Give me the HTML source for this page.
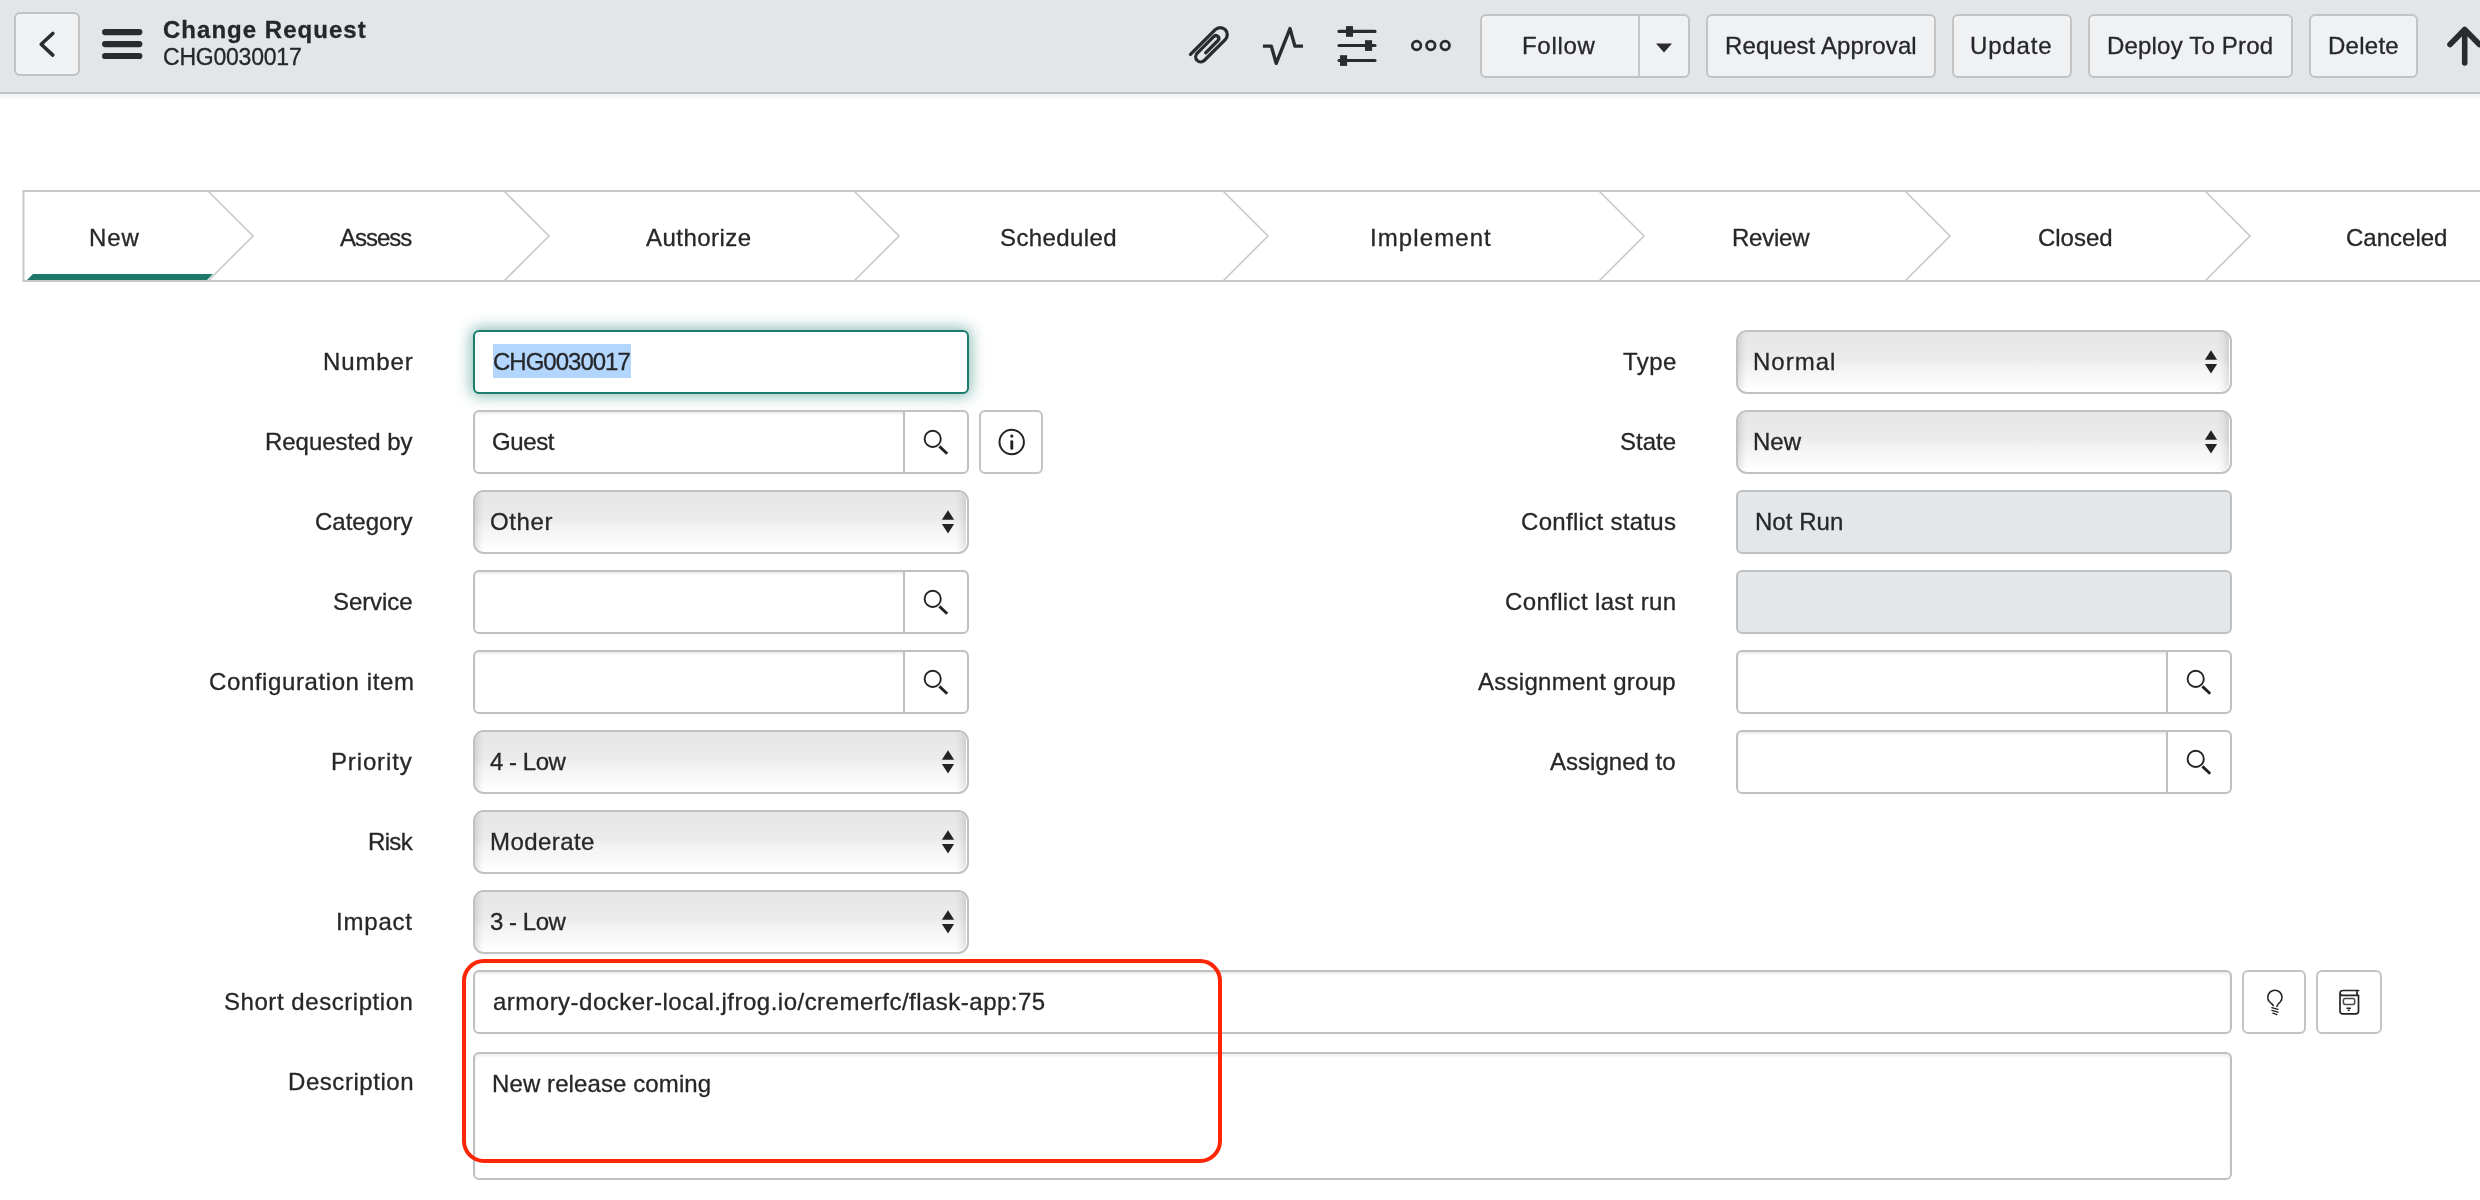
<!DOCTYPE html>
<html lang="en">
<head>
<meta charset="utf-8">
<title>Change Request CHG0030017</title>
<style>
*{box-sizing:border-box;margin:0;padding:0}
html,body{width:2480px;height:1200px;overflow:hidden;background:#fff}
body{position:relative;font-family:"Liberation Sans",sans-serif;font-size:24px;color:#2a2b2d;line-height:1}
.abs{position:absolute}
.t{position:absolute;white-space:nowrap;line-height:1;color:#262729;will-change:transform;-webkit-text-stroke:0.3px #262729}
#hdr{position:absolute;left:0;top:0;width:2480px;height:94px;background:#e3e6e9;border-bottom:2px solid #c1c1c1}
#hsh{position:absolute;left:0;top:94px;width:2480px;height:7px;background:linear-gradient(to bottom,#f1f1f1,#fff)}
.btn{position:absolute;top:14px;height:64px;border:2px solid #c3c3c4;border-radius:6px;background:#f0f1f3}
.inp{position:absolute;border:2px solid #c0c0c1;border-radius:6px;background:#fff;box-shadow:inset 0 2px 3px rgba(0,0,0,.08)}
.ro{position:absolute;border:2px solid #c0c0c1;border-radius:6px;background:#e4e7ea}
.sel{position:absolute;width:496px;height:64px;border:2px solid #c1c1c1;border-radius:11px;background:#fff;padding:0}
.sel i{position:absolute;left:0;top:0;right:1px;bottom:1px;border-radius:9px 8px 8px 9px;background:
 linear-gradient(to right,rgba(0,0,0,.10) 0,rgba(0,0,0,.03) 5px,rgba(0,0,0,0) 9px,rgba(0,0,0,0) calc(100% - 11px),rgba(0,0,0,.03) calc(100% - 6px),rgba(0,0,0,.11) 100%),
 linear-gradient(to bottom,#e6e6e6 0,#eaeaea 30%,#ececec 49%,#f0f0f0 51%,#f8f8f8 78%,#fff 100%)}
.ibtn{position:absolute;width:64px;height:64px;border:2px solid #c3c3c4;border-radius:6px;background:#fff}
</style>
</head>
<body>

<div id="hdr"></div><div id="hsh"></div>
<div class="btn" style="left:14px;top:12px;width:66px;height:64px"></div>
<svg class="abs" style="left:14px;top:12px" width="66" height="64" viewBox="0 0 66 64"><path d="M38.8 21.5 L27.2 32.3 L38.8 43.1" fill="none" stroke="#2a2b2d" stroke-width="3.6" stroke-linecap="round" stroke-linejoin="round"/></svg>
<svg class="abs" style="left:101px;top:27px" width="42" height="34" viewBox="0 0 42 34"><g fill="#2a2b2d"><rect x="1" y="2" width="40.4" height="6.2" rx="3.1"/><rect x="1" y="14" width="40.4" height="6.2" rx="3.1"/><rect x="1" y="25.9" width="40.4" height="6.2" rx="3.1"/></g></svg>
<span class="t" style="left:163.2px;top:17.6px;font-size:24px;letter-spacing:1.02px;font-weight:700;">Change Request</span>
<span class="t" style="left:163.3px;top:46.3px;font-size:23px;letter-spacing:-0.22px;">CHG0030017</span>
<svg class="abs" style="left:1180px;top:10px" width="290" height="70" viewBox="1180 10 290 70">
 <g fill="none" stroke="#2a2b2d" stroke-linecap="round" stroke-linejoin="round">
  <g transform="translate(1184,20) rotate(-45)"><path stroke-width="3.3" d="M-19.74 28.88 L15.32 28.88 A7.04 7.04 0 0 1 15.32 42.96 L-14.35 42.96 A5.1 5.1 0 0 1 -14.35 32.77 L9.58 32.77 A2.89 2.89 0 0 1 9.58 38.54 L-7.81 38.54"/></g>
  <path stroke-width="3.4" stroke-linecap="butt" stroke-linejoin="round" d="M1262.9 46.1 H1271.3 L1276.2 63.3 L1290 28.6 L1294.9 46.1 H1303"/>
  <path stroke-width="3.2" d="M1339 31.4 H1375 M1339 45.5 H1375 M1339 60.5 H1375"/>
  <circle cx="1416.6" cy="45.5" r="4.3" stroke-width="2.7"/><circle cx="1430.8" cy="45.5" r="4.3" stroke-width="2.7"/><circle cx="1445.2" cy="45.5" r="4.3" stroke-width="2.7"/>
 </g>
 <g fill="#2a2b2d"><rect x="1346" y="26.1" width="7" height="10.7"/><rect x="1365" y="40.2" width="7.1" height="10.7"/><rect x="1340" y="55.2" width="7.1" height="10.7"/></g>
</svg>
<div class="btn" style="left:1480px;width:210px"></div>
<div class="abs" style="left:1638px;top:16px;width:2px;height:60px;background:#c5c7c9"></div>
<svg class="abs" style="left:1655px;top:42px" width="18" height="12" viewBox="0 0 18 12"><path d="M1 1.5 H17 L9 10.5 Z" fill="#2a2b2d"/></svg>
<span class="t" style="left:1522.2px;top:33.7px;font-size:24px;letter-spacing:0.7px;">Follow</span>
<div class="btn" style="left:1706px;width:230px"></div>
<span class="t" style="left:1724.7px;top:33.7px;font-size:24px;letter-spacing:0.15px;">Request Approval</span>
<div class="btn" style="left:1952px;width:120px"></div>
<span class="t" style="left:1970.2px;top:33.7px;font-size:24px;letter-spacing:0.84px;">Update</span>
<div class="btn" style="left:2088px;width:205px"></div>
<span class="t" style="left:2106.8px;top:33.7px;font-size:24px;letter-spacing:0.19px;">Deploy To Prod</span>
<div class="btn" style="left:2309px;width:109px"></div>
<span class="t" style="left:2327.6px;top:33.7px;font-size:24px;letter-spacing:0.26px;">Delete</span>
<svg class="abs" style="left:2440px;top:20px" width="40" height="52" viewBox="2440 20 40 52"><path d="M2464.7 63 V29.5 M2450 44.5 L2464.7 29.5 L2479.4 44.5" fill="none" stroke="#2a2b2d" stroke-width="5.6" stroke-linecap="round" stroke-linejoin="round"/></svg>
<svg class="abs" style="left:0;top:180px" width="2480" height="110" viewBox="0 180 2480 110">
 <path d="M2490 191 H23.5 V281 H2490" fill="none" stroke="#c6c6c6" stroke-width="2"/>
 <g fill="none" stroke="#c9c9c9" stroke-width="1.6">
  <path d="M208 191 L253 236 L208 281"/>
  <path d="M504 191 L549 236 L504 281"/>
  <path d="M854 191 L899 236 L854 281"/>
  <path d="M1223 191 L1268 236 L1223 281"/>
  <path d="M1599 191 L1644 236 L1599 281"/>
  <path d="M1905 191 L1950 236 L1905 281"/>
  <path d="M2205 191 L2250 236 L2205 281"/>
 </g>
 <path d="M33 274 H213 L207 280 H27 Z" fill="#1d786a"/>
</svg>
<span class="t" style="left:88.5px;top:225.5px;font-size:24px;letter-spacing:0.9px;">New</span>
<span class="t" style="left:340.0px;top:225.5px;font-size:24px;letter-spacing:-1.0px;">Assess</span>
<span class="t" style="left:646.4px;top:225.5px;font-size:24px;letter-spacing:0.47px;">Authorize</span>
<span class="t" style="left:1000.4px;top:225.5px;font-size:24px;letter-spacing:0.4px;">Scheduled</span>
<span class="t" style="left:1369.6px;top:225.5px;font-size:24px;letter-spacing:1.09px;">Implement</span>
<span class="t" style="left:1732.1px;top:225.5px;font-size:24px;letter-spacing:-0.24px;">Review</span>
<span class="t" style="left:2037.6px;top:225.5px;font-size:24px;letter-spacing:-0.02px;">Closed</span>
<span class="t" style="left:2346.0px;top:225.5px;font-size:24px;letter-spacing:0.0px;">Canceled</span>
<span class="t" style="left:323.2px;top:349.7px;font-size:24px;letter-spacing:0.9px;">Number</span>
<span class="t" style="left:265.2px;top:429.7px;font-size:24px;letter-spacing:-0.05px;">Requested by</span>
<span class="t" style="left:315.0px;top:509.7px;font-size:24px;letter-spacing:0.0px;">Category</span>
<span class="t" style="left:333.2px;top:589.7px;font-size:24px;letter-spacing:-0.08px;">Service</span>
<span class="t" style="left:208.6px;top:669.7px;font-size:24px;letter-spacing:0.6px;">Configuration item</span>
<span class="t" style="left:331.0px;top:749.7px;font-size:24px;letter-spacing:0.86px;">Priority</span>
<span class="t" style="left:367.5px;top:829.7px;font-size:24px;letter-spacing:-0.67px;">Risk</span>
<span class="t" style="left:336.0px;top:909.7px;font-size:24px;letter-spacing:0.8px;">Impact</span>
<span class="t" style="left:224.4px;top:989.7px;font-size:24px;letter-spacing:0.55px;">Short description</span>
<span class="t" style="left:287.5px;top:1069.7px;font-size:24px;letter-spacing:0.55px;">Description</span>
<span class="t" style="left:1622.9px;top:349.7px;font-size:24px;letter-spacing:0.42px;">Type</span>
<span class="t" style="left:1620.0px;top:429.7px;font-size:24px;letter-spacing:0.0px;">State</span>
<span class="t" style="left:1520.9px;top:509.7px;font-size:24px;letter-spacing:0.3px;">Conflict status</span>
<span class="t" style="left:1504.6px;top:589.7px;font-size:24px;letter-spacing:0.36px;">Conflict last run</span>
<span class="t" style="left:1478.4px;top:669.7px;font-size:24px;letter-spacing:0.28px;">Assignment group</span>
<span class="t" style="left:1550.4px;top:749.7px;font-size:24px;letter-spacing:0.02px;">Assigned to</span>
<div class="inp" style="left:473px;top:330px;width:496px;height:64px;border-color:#1c7d6e;box-shadow:0 0 14px 3px rgba(28,125,110,.46)"></div>
<div class="abs" style="left:493px;top:344px;width:138px;height:33.5px;background:#b2d6fe"></div>
<span class="t" style="left:492.8px;top:349.7px;font-size:24px;letter-spacing:-1.0px;">CHG0030017</span>
<div class="inp" style="left:473px;top:410px;width:496px;height:64px;"></div><div class="abs" style="left:903px;top:412px;width:2px;height:60px;background:#c0c1c3"></div><div class="abs" style="left:905px;top:412px;width:62px;height:60px;background:#fff;border-radius:0 5px 5px 0"></div><svg class="abs" style="left:920px;top:427px" width="30" height="30" viewBox="0 0 30 30"><circle cx="12.7" cy="11.9" r="8.1" fill="none" stroke="#222" stroke-width="1.9"/><path d="M19.4 19.4 L27.2 26.8" stroke="#222" stroke-width="2.9"/></svg>
<span class="t" style="left:492.2px;top:429.7px;font-size:24px;letter-spacing:-0.38px;">Guest</span>
<div class="ibtn" style="left:979px;top:410px"></div>
<svg class="abs" style="left:995px;top:426px" width="32" height="32" viewBox="995 426 32 32"><circle cx="1011.7" cy="442" r="12.2" fill="none" stroke="#222" stroke-width="2"/><circle cx="1011.8" cy="436.1" r="1.6" fill="#222"/><path d="M1011.8 441.6 V448.4" stroke="#222" stroke-width="2.9" stroke-linecap="round"/></svg>
<div class="sel" style="left:473px;top:490px"><i></i></div><svg class="abs" style="left:940px;top:509px" width="16" height="28" viewBox="0 0 16 28"><path d="M8 1.3 L14.1 10.7 H1.9 Z M8 24.4 L14.1 15.1 H1.9 Z" fill="#232323"/></svg>
<span class="t" style="left:490.2px;top:509.7px;font-size:24px;letter-spacing:0.62px;">Other</span>
<div class="inp" style="left:473px;top:570px;width:496px;height:64px;"></div><div class="abs" style="left:903px;top:572px;width:2px;height:60px;background:#c0c1c3"></div><div class="abs" style="left:905px;top:572px;width:62px;height:60px;background:#fff;border-radius:0 5px 5px 0"></div><svg class="abs" style="left:920px;top:587px" width="30" height="30" viewBox="0 0 30 30"><circle cx="12.7" cy="11.9" r="8.1" fill="none" stroke="#222" stroke-width="1.9"/><path d="M19.4 19.4 L27.2 26.8" stroke="#222" stroke-width="2.9"/></svg>
<div class="inp" style="left:473px;top:650px;width:496px;height:64px;"></div><div class="abs" style="left:903px;top:652px;width:2px;height:60px;background:#c0c1c3"></div><div class="abs" style="left:905px;top:652px;width:62px;height:60px;background:#fff;border-radius:0 5px 5px 0"></div><svg class="abs" style="left:920px;top:667px" width="30" height="30" viewBox="0 0 30 30"><circle cx="12.7" cy="11.9" r="8.1" fill="none" stroke="#222" stroke-width="1.9"/><path d="M19.4 19.4 L27.2 26.8" stroke="#222" stroke-width="2.9"/></svg>
<div class="sel" style="left:473px;top:730px"><i></i></div><svg class="abs" style="left:940px;top:749px" width="16" height="28" viewBox="0 0 16 28"><path d="M8 1.3 L14.1 10.7 H1.9 Z M8 24.4 L14.1 15.1 H1.9 Z" fill="#232323"/></svg>
<span class="t" style="left:489.9px;top:749.7px;font-size:24px;letter-spacing:-0.46px;">4 - Low</span>
<div class="sel" style="left:473px;top:810px"><i></i></div><svg class="abs" style="left:940px;top:829px" width="16" height="28" viewBox="0 0 16 28"><path d="M8 1.3 L14.1 10.7 H1.9 Z M8 24.4 L14.1 15.1 H1.9 Z" fill="#232323"/></svg>
<span class="t" style="left:490.0px;top:829.7px;font-size:24px;letter-spacing:0.43px;">Moderate</span>
<div class="sel" style="left:473px;top:890px"><i></i></div><svg class="abs" style="left:940px;top:909px" width="16" height="28" viewBox="0 0 16 28"><path d="M8 1.3 L14.1 10.7 H1.9 Z M8 24.4 L14.1 15.1 H1.9 Z" fill="#232323"/></svg>
<span class="t" style="left:489.9px;top:909.7px;font-size:24px;letter-spacing:-0.46px;">3 - Low</span>
<div class="inp" style="left:473px;top:970px;width:1759px;height:64px;"></div>
<span class="t" style="left:492.9px;top:989.7px;font-size:24px;letter-spacing:0.49px;">armory-docker-local.jfrog.io/cremerfc/flask-app:75</span>
<div class="ibtn" style="left:2242px;top:970px"></div>
<svg class="abs" style="left:2260px;top:985px" width="30" height="34" viewBox="2260 985 30 34"><g fill="none" stroke="#222" stroke-width="1.55" stroke-linecap="round" stroke-linejoin="round">
 <path d="M2273.3 1005.6 C2272.6 1003.9 2271 1003.3 2269.4 1001.8 A7.1 7.1 0 1 1 2280.4 1001.8 C2278.9 1003.3 2277.6 1004.2 2276.9 1006.4"/>
 <path stroke-width="1.4" d="M2271.9 1007.6 L2277.9 1009.4 M2271.9 1010.4 L2277.9 1012.2 M2272.9 1013.2 L2276.8 1014.6"/></g></svg>
<div class="ibtn" style="left:2316px;top:970px;width:66px"></div>
<svg class="abs" style="left:2334px;top:985px" width="30" height="34" viewBox="2334 985 30 34"><g fill="none" stroke="#222" stroke-width="1.7" stroke-linejoin="round">
 <path stroke-linecap="round" d="M2358.6 990.5 H2343 A3 2.4 0 0 0 2340 992.9 V1011.3 A2.6 2.6 0 0 0 2342.6 1013.9 H2355.9 A2.6 2.6 0 0 0 2358.5 1011.3 V995.4 H2343 A3 2.5 0 0 1 2340 992.9"/>
 <path d="M2357 990.5 V995.4"/>
 <rect x="2343.4" y="998.4" width="11.3" height="6" rx="1.8" stroke="#4a4a4a" stroke-width="1.5"/>
 <path stroke-width="1.5" d="M2346.5 1008.3 H2350.9 M2347.7 1010.3 H2349.8"/></g></svg>
<div class="inp" style="left:473px;top:1052px;width:1759px;height:128px;"></div>
<span class="t" style="left:492.1px;top:1071.7px;font-size:24px;letter-spacing:0.1px;">New release coming</span>
<div class="sel" style="left:1736px;top:330px"><i></i></div><svg class="abs" style="left:2203px;top:349px" width="16" height="28" viewBox="0 0 16 28"><path d="M8 1.3 L14.1 10.7 H1.9 Z M8 24.4 L14.1 15.1 H1.9 Z" fill="#232323"/></svg>
<span class="t" style="left:1753.0px;top:349.7px;font-size:24px;letter-spacing:1.0px;">Normal</span>
<div class="sel" style="left:1736px;top:410px"><i></i></div><svg class="abs" style="left:2203px;top:429px" width="16" height="28" viewBox="0 0 16 28"><path d="M8 1.3 L14.1 10.7 H1.9 Z M8 24.4 L14.1 15.1 H1.9 Z" fill="#232323"/></svg>
<span class="t" style="left:1753.0px;top:429.7px;font-size:24px;letter-spacing:0.0px;">New</span>
<div class="ro" style="left:1736px;top:490px;width:496px;height:64px;"></div>
<span class="t" style="left:1754.9px;top:509.7px;font-size:24px;letter-spacing:0.04px;">Not Run</span>
<div class="ro" style="left:1736px;top:570px;width:496px;height:64px;"></div>
<div class="inp" style="left:1736px;top:650px;width:496px;height:64px;"></div><div class="abs" style="left:2166px;top:652px;width:2px;height:60px;background:#c0c1c3"></div><div class="abs" style="left:2168px;top:652px;width:62px;height:60px;background:#fff;border-radius:0 5px 5px 0"></div><svg class="abs" style="left:2183px;top:667px" width="30" height="30" viewBox="0 0 30 30"><circle cx="12.7" cy="11.9" r="8.1" fill="none" stroke="#222" stroke-width="1.9"/><path d="M19.4 19.4 L27.2 26.8" stroke="#222" stroke-width="2.9"/></svg>
<div class="inp" style="left:1736px;top:730px;width:496px;height:64px;"></div><div class="abs" style="left:2166px;top:732px;width:2px;height:60px;background:#c0c1c3"></div><div class="abs" style="left:2168px;top:732px;width:62px;height:60px;background:#fff;border-radius:0 5px 5px 0"></div><svg class="abs" style="left:2183px;top:747px" width="30" height="30" viewBox="0 0 30 30"><circle cx="12.7" cy="11.9" r="8.1" fill="none" stroke="#222" stroke-width="1.9"/><path d="M19.4 19.4 L27.2 26.8" stroke="#222" stroke-width="2.9"/></svg>
<div class="abs" style="left:462px;top:959px;width:759.6px;height:204px;border:4.8px solid #ff2605;border-radius:22px"></div>
</body>
</html>
